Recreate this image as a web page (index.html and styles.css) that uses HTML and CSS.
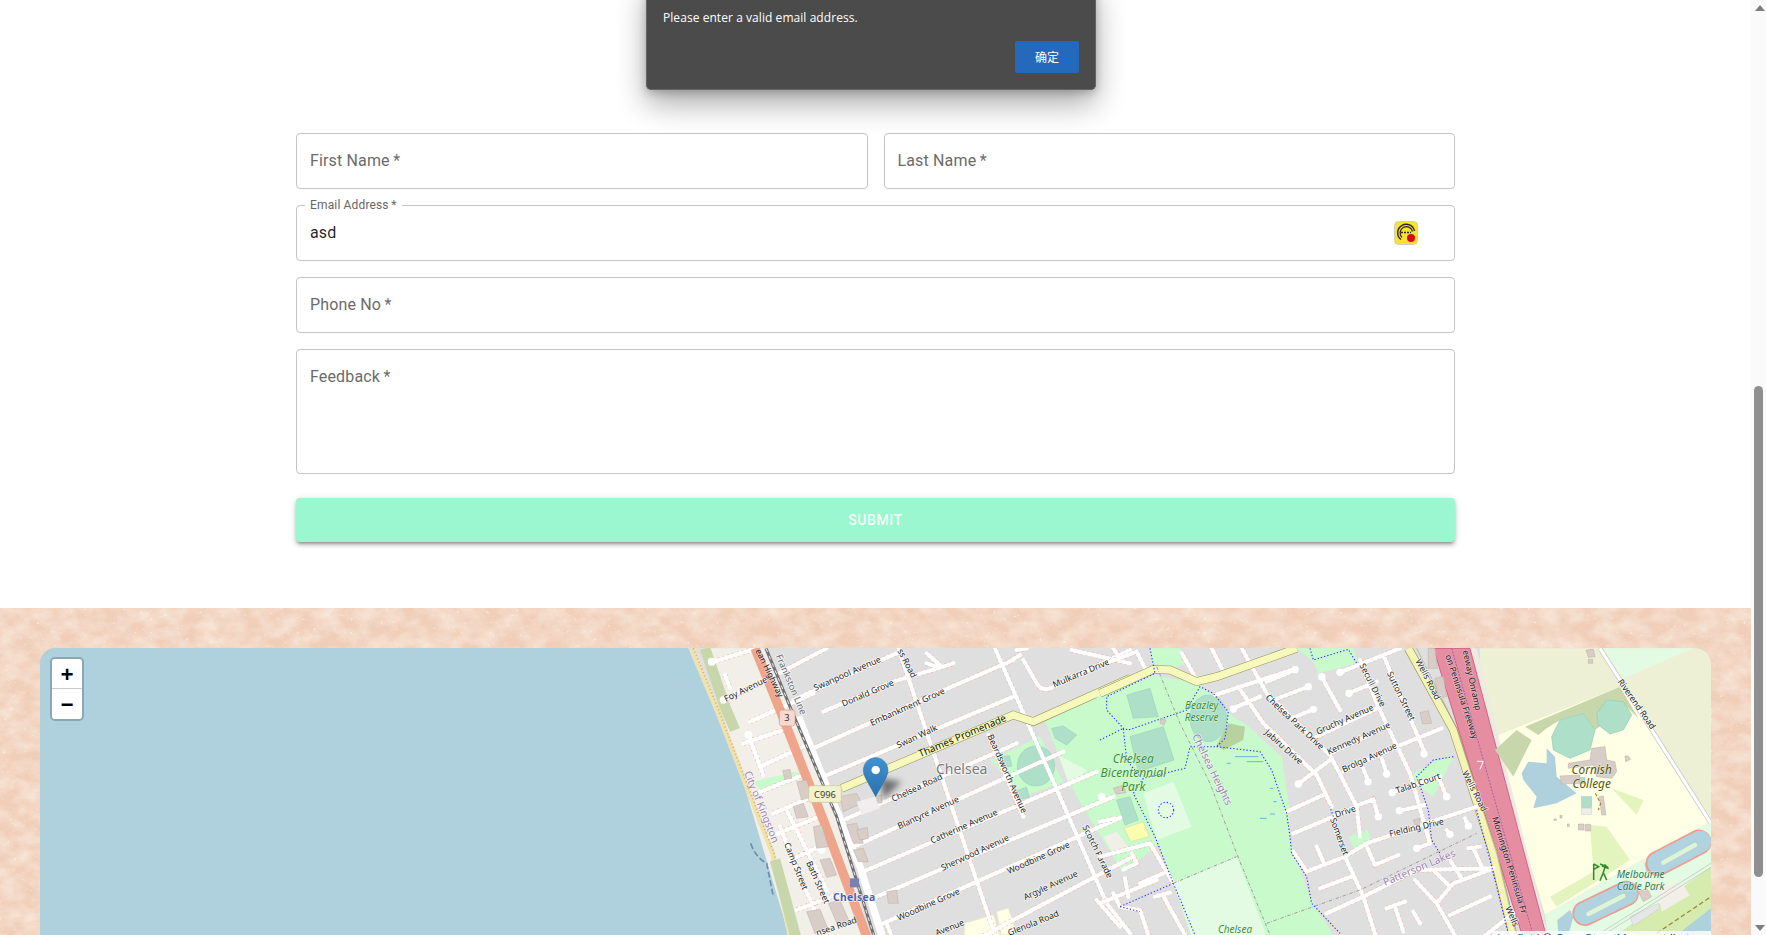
FILE: index.html
```html
<!DOCTYPE html>
<html lang="en">
<head>
<meta charset="utf-8">
<title>Contact</title>
<link rel="stylesheet" href="styles.css">
</head>
<body>
<div class="dialog">
  <p class="dialog-text">Please enter a valid email address.</p>
  <div class="dialog-actions"><button class="dialog-btn" type="button">确定</button></div>
</div>

<main class="form-page">
  <form class="form">
    <div class="row-two">
      <div class="field"><span class="placeholder">First Name&thinsp;*</span></div>
      <div class="field"><span class="placeholder">Last Name&thinsp;*</span></div>
    </div>
    <div class="field field-filled">
      <span class="float-label">Email Address&thinsp;*</span>
      <span class="value">asd</span>
      <svg class="ext-icon" viewBox="0 0 24 24" aria-hidden="true">
        <rect x="0.5" y="0.5" width="23" height="23" rx="4" fill="#fde130" stroke="#cfcfc0"/>
        <path d="M7 18.5A8.5 8.5 0 1 1 20.5 10" fill="none" stroke="#2a2a20" stroke-width="1.4"/>
        <path d="M8 16.5A6.3 6.3 0 1 1 18.5 10.5" fill="none" stroke="#2a2a20" stroke-width="1.3"/>
        <path d="M7 11.5h10" fill="none" stroke="#2a2a20" stroke-width="1.4" stroke-dasharray="2 1"/>
        <circle cx="17" cy="17" r="4" fill="#d8090c"/>
      </svg>
    </div>
    <div class="field"><span class="placeholder">Phone No&thinsp;*</span></div>
    <div class="field field-area"><span class="placeholder">Feedback&thinsp;*</span></div>
    <button class="submit" type="button">SUBMIT</button>
  </form>
</main>

<section class="map-section">
  <svg class="paper" aria-hidden="true">
    <filter id="paperNoise" x="0" y="0" width="100%" height="100%">
      <feTurbulence type="fractalNoise" baseFrequency="0.05 0.07" numOctaves="4" seed="7"/>
      <feColorMatrix type="matrix" values="0 0 0 0 .97  0 0 0 0 .87  0 0 0 0 .79  1.2 0 0 0 -.35"/>
    </filter>
    <filter id="paperSpeck" x="0" y="0" width="100%" height="100%">
      <feTurbulence type="fractalNoise" baseFrequency="0.3" numOctaves="3" seed="11"/>
      <feColorMatrix type="matrix" values="0 0 0 0 1  0 0 0 0 .97  0 0 0 0 .93  9 0 0 0 -6.5"/>
    </filter>
    <rect width="100%" height="100%" filter="url(#paperNoise)"/>
    <rect width="100%" height="100%" filter="url(#paperSpeck)" opacity=".5"/>
  </svg>
  <div class="map">
    <svg class="map-art" viewBox="40 648 1671 287" aria-hidden="true">
      <defs>
        <filter id="pinBlur" x="-50%" y="-50%" width="200%" height="200%"><feGaussianBlur stdDeviation="9"/></filter>
        <linearGradient id="pinFill" x1="0" y1="0" x2="0" y2="1"><stop offset="0" stop-color="#3f92d2"/><stop offset="1" stop-color="#2a70ae"/></linearGradient>
        <path id="w-st" d="M100,65 L230,25 M130,180 L260,120 L440,25 M340,180 L660,35 M135,105 L150,145 M430,215 L640,125 L790,80 L820,70 M740,40 L780,75 M400,325 L700,190 L1000,60 M430,410 L1000,170 M480,545 L1010,310 M510,625 L1150,335 M550,695 L1250,395 M590,770 L1300,470 M610,850 L1350,520 M830,930 L1350,655 M655,25 L960,930 M945,25 L1280,790 L1350,880 M925,285 L1030,530 M1030,60 L1070,130 Q1085,155 1110,145 L1350,30 M980,70 L1020,45 M205,285 L250,405 M190,310 L340,260 M210,245 L400,160 M240,380 L370,320 M230,460 L380,400 M280,520 L400,470 M270,590 L430,525 M300,560 L355,700 L400,800 L430,900 M320,510 L440,750 M330,660 L440,610 M350,810 L480,760 M620,850 L650,930 M740,70 Q780,90 820,70 M1010,30 L1040,25 M1175,30 L1350,70"/>
        <path id="e-st" d="M345,165 L590,85 M400,205 L480,170 M500,125 L585,90 M520,180 L625,140 M575,235 L640,208 M425,25 L500,160 L690,345 L770,500 L780,590 M415,140 L490,250 L650,405 L695,500 M595,432 L690,360 M665,110 L720,210 M720,97 L900,25 M745,160 L830,125 M690,340 L860,260 M650,290 L830,205 M730,395 L890,320 L1025,265 M850,45 L975,340 M780,60 L830,190 L930,400 L990,610 M790,385 L805,425 M845,355 L860,400 M1015,410 L1040,470 M875,458 L1020,410 M775,495 L820,478 L835,530 M900,512 L975,495 M735,650 L800,610 L1130,500 M560,515 L670,465 M580,580 L700,530 L770,500 M580,635 L620,695 L735,650 M650,620 L670,665 M735,650 L790,770 L840,930 M800,620 L825,675 L895,645 M660,745 L760,708 M680,820 L790,770 L950,690 L1180,685 M950,625 L990,610 M1105,625 L1140,620 M1120,625 L1150,690 M1050,660 L1085,715 M1000,690 L1050,740 M945,720 L1010,790 L1090,930 M1010,790 L1060,730 L1180,685 M1050,825 L1170,770 M860,805 L915,785 M885,800 L910,875 M940,815 L960,850 M1100,930 L1240,820 M1040,570 L1050,585 M1095,535 L1105,560 M30,65 L110,35 M110,35 L135,85 M335,25 L365,85 M245,40 L285,110 M40,25 L60,55 M0,650 L150,610 L220,730 M95,640 L110,670 L70,688 M75,715 L85,770 M0,790 L170,720 M120,730 L190,700 M165,770 L210,758 M190,768 L280,930 M40,760 L60,800 M60,800 L120,810 L160,930 M0,545 L45,535 M-10,780 L60,860"/>
      </defs>
      <rect class="m-water" x="40" y="648" width="1671" height="287"/>
      <polygon class="m-resi" points="688,648 713,707 747,793 770,853 790,947 1711,947 1711,648"/>

      <!-- east farmland and college grounds -->
      <g transform="translate(1480 640) scale(.33333)">
        <polygon class="m-farm" points="0,25 693,25 693,560 40,290 0,300"/>
        <polygon class="m-lightpark" points="360,25 640,25 430,115"/>
        <polygon class="m-school" points="40,290 430,135 670,520 693,545 195,825 70,400"/>
        <polygon class="m-lightpark" points="195,825 693,545 693,930 210,930"/>
        <polygon class="m-meadow" points="410,930 693,680 693,930"/>
        <polygon class="m-water" points="560,930 693,810 693,930"/>
      </g>

      <!-- west part -->
      <g transform="translate(680 640) scale(.33333)">
        <polygon class="m-mixed" points="70,25 250,25 350,230 470,530 580,930 340,930"/>
        <polyline class="m-beach" points="35,25 108,200 208,460 278,640 340,930"/>
        <polyline class="m-beach-dash" points="40,25 112,200 212,460 282,640 344,930"/>
        <polyline class="m-scrub" points="75,25 135,200 165,270"/>
        <polyline class="m-scrub" points="285,660 315,770 350,900"/>
        <polygon class="m-park" points="220,425 345,395 375,405 245,455"/>
        <polygon class="m-park" points="1095,245 1350,125 1450,600 1330,700 1190,470"/>
        <polygon class="m-park" points="930,360 1080,290 1150,425 1030,470"/>
        <ellipse class="m-pitch" cx="1068" cy="378" rx="56" ry="60"/>
        <polygon class="m-pitch" points="965,350 988,347 996,378 975,382"/>
        <polygon class="m-pitch" points="1010,452 1040,442 1048,472 1020,478"/>
        <polygon class="m-lightpark" points="1135,345 1220,390 1170,440"/>
        <polygon class="m-pitch" points="1115,265 1150,258 1190,285 1160,315 1125,295"/>
        <polygon class="m-school" points="855,850 940,825 960,885 980,930 850,930"/>
        <polygon class="m-school" points="950,815 985,805 1010,880 965,885"/>

        <use href="#w-st" class="road-under"/>
        <use href="#w-st" class="road-top"/>
        <circle class="cul" cx="95" cy="65" r="12"/><circle class="cul" cx="130" cy="180" r="11"/><circle class="cul" cx="205" cy="285" r="12"/><circle class="cul" cx="425" cy="630" r="11"/><circle class="cul" cx="1265" cy="470" r="11"/>

        <polyline class="rail-road" points="355,230 440,440 540,680 620,930"/>
        <polyline class="m-primary" points="225,25 300,210 430,540 575,930"/>
        <polyline class="m-rail" points="258,25 330,200 470,530 595,930"/>
        <polyline class="m-railline" points="258,25 330,200 470,530 595,930"/>
        <polyline class="m-tertiary-c" points="485,445 1000,225 1060,245 1350,115"/>
        <polyline class="m-tertiary" points="485,445 1000,225 1060,245 1350,115"/>

        <g class="bldg">
          <polygon points="308,392 330,388 335,415 315,418"/><polygon points="340,500 370,490 385,530 350,535"/><polygon points="500,555 530,550 550,610 520,610"/><polygon points="530,570 562,562 565,595 540,600"/><polygon points="520,630 550,625 565,665 535,665"/><polygon points="420,660 450,655 470,705 440,712"/><polygon points="445,790 480,780 510,850 475,860"/><polygon points="380,815 420,808 445,870 405,880"/><polygon points="480,470 530,460 545,490 490,515"/><polygon points="620,755 650,750 655,790 625,790"/><polygon points="590,468 604,465 606,488 592,490"/><polygon points="350,425 380,420 395,470 365,480"/><polygon points="400,560 425,555 445,620 410,625"/>
          <polygon class="bldg-light" points="530,485 585,470 600,505 545,525"/>
        </g>
        <path class="coast-blue" d="M212,610 Q225,650 260,670 Q270,720 280,770"/>
        <rect class="station" x="510" y="715" width="27" height="27"/>

        <text class="lbl" transform="translate(138 186) rotate(-26)">Foy Avenue</text>
        <text class="lbl" transform="translate(406 153) rotate(-24)">Swanpool Avenue</text>
        <text class="lbl" transform="translate(490 200) rotate(-23)">Donald Grove</text>
        <text class="lbl" transform="translate(575 258) rotate(-24)">Embankment Grove</text>
        <text class="lbl" transform="translate(655 325) rotate(-25)">Swan Walk</text>
        <text class="lbl lbl-big" transform="translate(721 352) rotate(-23)">Thames Promenade</text>
        <text class="lbl" transform="translate(1123 143) rotate(-23)">Mulkarra Drive</text>
        <text class="lbl" transform="translate(640 486) rotate(-25)">Chelsea Road</text>
        <text class="lbl" transform="translate(658 568) rotate(-25)">Blantyre Avenue</text>
        <text class="lbl" transform="translate(756 611) rotate(-24)">Catherine Avenue</text>
        <text class="lbl" transform="translate(788 693) rotate(-25)">Sherwood Avenue</text>
        <text class="lbl" transform="translate(986 703) rotate(-24)">Woodbine Grove</text>
        <text class="lbl" transform="translate(656 843) rotate(-24)">Woodbine Grove</text>
        <text class="lbl" transform="translate(1036 781) rotate(-25)">Argyle Avenue</text>
        <text class="lbl" transform="translate(988 888) rotate(-22)">Glenola Road</text>
        <text class="lbl" transform="translate(770 888) rotate(-22)">Avenue</text>
        <text class="lbl" transform="translate(412 888) rotate(-19)">nsea Road</text>
        <text class="lbl" transform="translate(922 288) rotate(66)">Beardsworth Avenue</text>
        <text class="lbl" transform="translate(1207 561) rotate(64)">Scotch Parade</text>
        <text class="lbl" transform="translate(312 612) rotate(68)">Camp Street</text>
        <text class="lbl" transform="translate(378 668) rotate(66)">Bath Street</text>
        <text class="lbl" transform="translate(652 32) rotate(63)">ss Road</text>
        <text class="lbl lbl-road" transform="translate(226 32) rotate(64)">ean Highway</text>
        <text class="lbl lbl-grey" transform="translate(287 48) rotate(67)">Frankston Line</text>
        <text class="lbl lbl-purple" transform="translate(192 398) rotate(68)">City of Kingston</text>
        <text class="lbl lbl-suburb" x="768" y="403">Chelsea</text>
        <text class="lbl lbl-station" x="459" y="783">Chelsea</text>
        <g class="shield-c"><rect x="386" y="437" width="98" height="50" rx="8"/><text x="435" y="473">C996</text></g>
        <g class="shield-3"><rect x="298" y="210" width="47" height="48" rx="8"/><text x="321" y="244">3</text></g>
      </g>

      <!-- middle and east part -->
      <g transform="translate(1100 640) scale(.33333)">
        <polygon class="m-park" points="150,25 240,25 265,70 160,100"/>
        <polygon class="m-park" points="590,25 760,25 775,70 655,100 640,65"/>
        <polygon class="m-park" points="-10,170 160,105 290,130 345,170 400,230 440,255 545,350 568,500 570,600 625,760 725,930 285,930 220,730 170,600 100,470 -10,300"/>
        <polygon class="m-park" points="925,410 1010,360 1060,350 1000,470 960,440"/>
        <polygon class="m-park" points="745,590 805,570 815,610 765,630"/>
        <polygon class="m-lightpark" points="130,460 220,425 275,560 170,600"/>
        <polygon class="m-lightpark" points="220,730 410,650 515,930 290,930"/>
        <polygon class="m-pitch" points="80,165 150,145 175,230 100,235"/>
        <polygon class="m-pitch" points="90,290 190,260 222,360 115,395"/>
        <ellipse class="m-pitch" cx="325" cy="235" rx="55" ry="70"/>
        <polygon class="m-wood" points="350,315 385,250 435,260 430,300 370,330"/>
        <polygon class="m-mixed" points="10,590 50,575 85,620 40,640"/>
        <polygon class="m-school m-court" points="72,565 130,545 148,590 92,605"/>
        <polygon class="m-pitch" points="50,480 90,470 115,540 75,555"/>

        <polygon class="m-verge" points="1110,25 1130,25 1355,930 1340,930"/>
        <polygon class="m-motorway" points="1000,25 1110,25 1350,930 1280,930"/>
        <polyline class="m-motor-line" points="1055,25 1312,930"/>
        <polyline class="m-tert-edge" points="925,25 1060,270 1180,640 1250,930"/>
        <polyline class="m-tert2" points="925,25 1060,270 1180,640 1250,930"/>
        <polyline class="m-thin" points="950,25 1070,265 1190,640 1260,930"/>

        <use href="#e-st" class="road-under"/>
        <use href="#e-st" class="road-top"/>
        <circle class="cul" cx="585" cy="89" r="11"/><circle class="cul" cx="400" cy="207" r="11"/><circle class="cul" cx="625" cy="140" r="11"/><circle class="cul" cx="640" cy="208" r="11"/><circle class="cul" cx="665" cy="110" r="11"/><circle class="cul" cx="720" cy="97" r="11"/><circle class="cul" cx="747" cy="160" r="11"/><circle class="cul" cx="595" cy="432" r="11"/><circle class="cul" cx="972" cy="342" r="11"/><circle class="cul" cx="804" cy="425" r="11"/><circle class="cul" cx="860" cy="402" r="11"/><circle class="cul" cx="877" cy="458" r="11"/><circle class="cul" cx="1040" cy="470" r="11"/><circle class="cul" cx="835" cy="530" r="11"/><circle class="cul" cx="898" cy="512" r="11"/><circle class="cul" cx="1050" cy="583" r="11"/><circle class="cul" cx="1105" cy="558" r="11"/><circle class="cul" cx="950" cy="625" r="11"/><circle class="cul" cx="5" cy="470" r="11"/>

        <polyline class="m-tertiary-c" points="0,160 160,88 210,90 290,125 350,110 590,25"/>
        <polyline class="m-tertiary" points="0,160 160,88 210,90 290,125 350,110 590,25"/>

        <path class="footpath" d="M150,25 L165,100 L20,170 L20,210 L70,265 L85,270 L260,210 L300,140 L340,160 L385,215 L375,295 L350,320 L270,320 L255,385 L130,415 L100,460 L165,590 L220,730 L285,885 M0,300 L70,265 L80,360 L120,410 M630,25 L640,60 L745,28 L770,70 M350,320 L480,335 L515,390 L560,520 L570,590 L575,640 L620,710 L635,790 L720,880 M220,730 L60,800 M1060,350 L1000,360 L950,410 L985,510 L995,600 L1020,640 M60,800 L120,815 M1130,510 L1170,660 L1225,880 M700,530 L690,500"/>
        <circle class="footpath" cx="198" cy="510" r="23"/>
        <path class="stream" d="M405,350h70M440,365h50M380,370h12M510,445h10M520,485h10M510,522h15M480,535h20"/>
        <path class="track" d="M170,80 L240,250 L330,430 L410,640 L510,885 M500,850 L780,750 L1130,580"/>
        <path class="track" d="M220,730 L410,650"/>
        <g class="bldg"><polygon points="960,218 985,212 995,250 968,252"/><polygon points="940,540 958,535 960,555 945,555"/><polygon points="985,25 1005,25 1012,85 985,85"/><polygon points="1005,115 1030,110 1040,170 1015,172"/><polygon points="182,235 198,240 192,255 180,250"/><polygon points="40,445 70,435 78,458 48,462"/></g>

        <text class="lbl" transform="translate(495 175) rotate(43)">Chelsea Park Drive</text>
        <text class="lbl" transform="translate(493 280) rotate(42)">Jabiru Drive</text>
        <text class="lbl" transform="translate(653 284) rotate(-24)">Gruchy Avenue</text>
        <text class="lbl" transform="translate(686 344) rotate(-24)">Kennedy Avenue</text>
        <text class="lbl" transform="translate(731 398) rotate(-25)">Brolga Avenue</text>
        <text class="lbl" transform="translate(891 461) rotate(-19)">Talab Court</text>
        <text class="lbl" transform="translate(778 76) rotate(63)">Secull Drive</text>
        <text class="lbl" transform="translate(860 100) rotate(64)">Sutton Street</text>
        <text class="lbl" transform="translate(946 63) rotate(63)">Wells Road</text>
        <text class="lbl" transform="translate(1086 398) rotate(63)">Wells Road</text>
        <text class="lbl" transform="translate(1216 803) rotate(67)">Wells</text>
        <text class="lbl" transform="translate(690 538) rotate(70)">Somerset</text>
        <text class="lbl" transform="translate(708 533) rotate(-18)">Drive</text>
        <text class="lbl" transform="translate(870 590) rotate(-13)">Fielding Drive</text>
        <text class="lbl lbl-purple" transform="translate(855 738) rotate(-23)">Patterson Lakes</text>
        <text class="lbl lbl-purple" transform="translate(276 288) rotate(64)">Chelsea Heights</text>
        <text class="lbl-park" x="305" y="206">Beazley</text>
        <text class="lbl-park" x="305" y="242">Reserve</text>
        <text class="lbl-park lbl-park-big" x="100" y="368">Chelsea</text>
        <text class="lbl-park lbl-park-big" x="100" y="412">Bicentennial</text>
        <text class="lbl-park lbl-park-big" x="100" y="454">Park</text>
        <text class="lbl-park" x="405" y="880">Chelsea</text>
        <text class="lbl lbl-road" transform="translate(1036 47) rotate(72)">on Peninsula Freeway</text>
        <text class="lbl lbl-road" transform="translate(1088 32) rotate(78)">eeway Onramp</text>
        <text class="lbl lbl-road" transform="translate(1176 533) rotate(73)">Mornington Peninsula Fr</text>
        <path class="mini-7" d="M1131,364H1150L1140,388"/>
      </g>

      <!-- college details -->
      <g transform="translate(1480 640) scale(.33333)">
        <polygon class="m-scrub-f" points="135,260 420,140 475,235 440,200 345,270 310,220 240,240 200,265 175,285"/>
        <polygon class="m-scrub-f" points="45,330 110,270 155,300 100,410"/>
        <polygon class="m-pitch m-pond" points="215,290 240,240 310,220 345,270 330,330 270,355 220,330"/>
        <polygon class="m-pitch m-pond" points="350,220 380,180 430,185 455,225 430,270 390,282 355,255"/>
        <polygon class="m-water" points="125,400 145,365 200,370 200,325 225,350 230,410 290,460 230,490 160,505 170,470 130,420"/>
        <polygon class="m-lawn" points="395,445 490,480 470,525"/>
        <polygon class="m-lawn" points="330,555 380,560 450,660 340,695"/>
        <polygon class="m-lawn" points="210,770 340,695 450,660 230,800"/>
        <polygon class="m-meadow" points="410,885 693,680 693,770 530,880"/>
        <polyline class="river-road-edge" points="360,25 693,550"/>
        <polyline class="river-road" points="360,25 693,550"/>
        <g class="bldg">
          <polygon points="335,325 375,320 380,360 405,365 410,395 395,415 350,410 340,375 265,385 265,370 330,360"/>
          <polygon points="240,408 300,405 300,430 245,432"/>
          <polygon points="318,30 340,28 345,50 325,52"/><polygon points="325,58 338,58 338,70 325,70"/>
          <polygon points="435,348 445,348 452,358 437,365"/>
          <polygon points="295,552 312,552 312,570 295,570"/><polygon points="316,553 332,553 332,573 316,573"/>
          <rect x="262" y="552" width="6" height="8"/><rect x="240" y="526" width="6" height="8"/><rect x="222" y="537" width="7" height="4"/>
          <polygon points="358,470 370,468 378,525 365,525"/>
          <polygon points="475,755 500,745 515,770 490,785"/>
          <polygon points="495,670 510,665 515,690 500,695"/>
        </g>
        <rect class="m-pitch" x="305" y="470" width="30" height="33"/>
        <rect class="m-court2" x="304" y="505" width="31" height="18"/>
        <rect class="m-pitch" x="300" y="413" width="15" height="18"/>
        <path class="school-dash" d="M346,460 L362,490 L355,510"/>

        <g class="pool">
          <path class="pool-edge" d="M535,670 L660,605"/><path class="pool-water" d="M535,670 L660,605"/><path class="pool-inner" d="M550,668 L645,615"/>
          <path class="pool-edge" d="M315,820 L440,760"/><path class="pool-water" d="M315,820 L440,760"/><path class="pool-inner" d="M325,822 L430,768"/>
        </g>
        <polygon class="m-water" points="232,840 270,810 280,830 265,885 235,885"/>
        <polygon class="m-grey" points="530,740 605,730 630,765 545,815"/>
        <polygon class="m-grey2" points="450,830 535,790 540,805 460,858"/>
        <path class="rail-thin" d="M360,880 L693,670"/>
        <path class="rail-thin" d="M370,885 L693,682"/>
        <path class="brown-dash" d="M530,880 L693,770"/>
        <polygon class="m-water" points="590,885 693,805 693,885"/>

        <path class="golf" d="M341,720V672M341,672L356,680L341,688"/>
        <path class="golf" d="M375,682L369,700L360,722M371,700L380,720M366,678L386,686M360,672L385,682"/>
        <circle class="golf-fill" cx="375" cy="678" r="5"/>

        <text class="lbl" transform="translate(412 125) rotate(55)">Riverend Road</text>
        <text class="lbl-college" x="335" y="403">Cornish</text>
        <text class="lbl-college" x="335" y="445">College</text>
        <text class="lbl-park lbl-cable" x="482" y="714">Melbourne</text>
        <text class="lbl-park lbl-cable" x="482" y="749">Cable Park</text>
      </g>

      <!-- marker -->
      <g transform="translate(680 640) scale(.33333)">
        <path class="pin-blur" d="M600,415 L665,425 L610,478 Z"/>
        <path class="pin" d="M587,353C565,353 550,371 550,392C550,410 575,445 587,470C600,445 624,410 624,392C624,371 608,353 587,353Z"/>
        <circle class="pin-hole" cx="587" cy="390" r="13"/>
      </g>
    </svg>

    <div class="zoom">
      <button class="zoom-btn" type="button">+</button>
      <button class="zoom-btn" type="button">−</button>
    </div>
    <div class="attribution"><a>Leaflet</a> | © <a>OpenStreetMap</a> contributors</div>
  </div>
</section>

<div class="page-rail">
  <span class="rail-arrow rail-arrow-up"></span>
  <span class="rail-thumb"></span>
  <span class="rail-arrow rail-arrow-down"></span>
</div>
</body>
</html>
```

FILE: styles.css
```css
html { height: 935px; overflow: hidden; background: #fff; }
body { margin: 0; position: relative; width: 1766px; padding-right: 15px; box-sizing: border-box; height: 935px; font-family: Roboto, "Liberation Sans", sans-serif; }

/* native alert */
.dialog {
  position: absolute; left: 646px; top: -20px; z-index: 5; width: 450px; height: 110px;
  box-sizing: border-box; padding: 29px 16px 16px 16px;
  background: #4b4b4b; border: 1px solid #666; border-top: 0; border-radius: 5px;
  box-shadow: 0 14px 30px rgba(0,0,0,.33), 0 3px 8px rgba(0,0,0,.2);
  color: #fff; font: 12px/18px "Open Sans", "Noto Sans", sans-serif; letter-spacing: .06px;
}
.dialog-text { margin: 0; }
.dialog-actions { display: flex; justify-content: flex-end; margin-top: 14px; }
.dialog-btn {
  width: 64px; height: 32px; padding: 0 0 2px; border: 0; border-radius: 2px; background: #2569bd; color: #fff;
  font: 12px "Noto Sans CJK SC", sans-serif;
}

/* form */
.form-page { padding-top: 133px; height: 608px; box-sizing: border-box; }
.form { width: 1159px; margin: 0 auto; display: flex; flex-direction: column; gap: 16px; }
.row-two { display: grid; grid-template-columns: 1fr 1fr; gap: 16px; }
.field {
  position: relative; box-sizing: border-box; height: 56px; padding: 15px 13px;
  display: flex; align-items: flex-start; justify-content: space-between;
  border: 1px solid #c4c4c4; border-radius: 4px; font-size: 16px; line-height: 23px; letter-spacing: .15px;
}
.field-area { height: 125px; }
.placeholder { color: #6b6b6b; }
.value { color: rgba(0,0,0,.87); }
.float-label {
  position: absolute; left: 8px; top: -8px; padding: 0 5px; background: #fff;
  color: #666; font-size: 12px; line-height: 14px;
}
.ext-icon { position: absolute; left: 1097px; top: 15px; width: 24px; height: 24px; }
.submit {
  height: 44px; margin-top: 8px; padding: 0; border: 0; border-radius: 4px; background: #9af7cf;
  color: rgba(255,255,255,.9); font: 500 14px Roboto, sans-serif; letter-spacing: .55px;
  box-shadow: 0 3px 3px -2px rgba(0,0,0,.3), 0 3px 4px 0 rgba(0,0,0,.2), 0 1px 8px 0 rgba(0,0,0,.12);
}

/* map section */
.map-section { position: relative; height: 327px; box-sizing: border-box; padding: 40px 40px 0; background: #f0ceb8; overflow: hidden; }
.paper { position: absolute; inset: 0; width: 100%; height: 100%; }
.map { position: relative; height: 287px; border-radius: 16px 16px 0 0; overflow: hidden; background: #aed1dd; }
.map-art { display: block; width: 1671px; height: 287px; }
.zoom {
  position: absolute; left: 10px; top: 9px; display: flex; flex-direction: column; width: 30px;
  border: 2px solid rgba(0,0,0,.2); border-radius: 5px; background-clip: padding-box;
}
.zoom-btn {
  width: 30px; height: 30px; padding: 5px 0 0; border: 0; background: #fff; color: #000;
  font: bold 22px/25px "Liberation Mono", monospace;
}
.zoom-btn:first-child { border-bottom: 1px solid #ccc; border-radius: 3px 3px 0 0; }
.zoom-btn:last-child { border-radius: 0 0 3px 3px; }
.attribution {
  position: absolute; right: 0; top: 283px; height: 16px; padding: 0 5px; box-sizing: border-box;
  background: rgba(255,255,255,.8); color: #333; font: 12px/16px "Liberation Sans", sans-serif;
}
.attribution a { color: #0078a8; }

/* map fills */
.m-water { fill: #aed1dd; }
.m-resi { fill: #e0dfdf; }
.m-farm { fill: #eef0d5; }
.m-school { fill: #ffffe5; stroke: #eeeecb; stroke-width: 2; }
.m-lightpark { fill: #e3fbe3; }
.m-meadow { fill: #d5ecae; }
.m-mixed { fill: #f2efe9; }
.m-park { fill: #c8facc; }
.m-pitch { fill: #aedfc9; stroke: #93cdb4; stroke-width: 1.5; }
.m-pond { stroke: #8ecdb2; stroke-width: 2; }
.m-wood { fill: #b5d29f; }
.m-lawn { fill: #e3f4bf; }
.m-scrub-f { fill: #c8d7ab; }
.m-court { fill: #fdfdb0; stroke: #cfe0b0; }
.m-court2 { fill: #eeeeee; stroke: #d5cfc8; stroke-width: 1.5; }
.m-grey { fill: #f2efe9; }
.m-grey2 { fill: #e6e6e6; stroke: #c8c8c8; stroke-width: 1.5; }
.m-verge { fill: #ebebe0; }
.m-motorway { fill: #e58ea2; stroke: #d8336f; stroke-width: 2; }
.m-beach, .m-beach-dash, .m-scrub, .rail-road, .m-primary, .m-rail, .m-railline, .m-tertiary, .m-tertiary-c, .m-tert-edge, .m-tert2, .m-thin, .m-motor-line, .river-road, .river-road-edge { fill: none; }
.m-beach { stroke: #efe2ac; stroke-width: 15; }
.m-beach-dash { stroke: #d6a878; stroke-width: 5; stroke-dasharray: 3 8; }
.m-scrub { stroke: #c8d7ab; stroke-width: 32; }
.rail-road { stroke: #fff; stroke-width: 22; }
.m-primary { stroke: #efa58c; stroke-width: 28; }
.m-rail { stroke: #707070; stroke-width: 9; }
.m-railline { stroke: #eee; stroke-width: 3; stroke-dasharray: 12 12; }
.m-tertiary-c { stroke: #8f9150; stroke-width: 25; }
.m-tertiary { stroke: #f7f8bb; stroke-width: 22; }
.m-tert-edge { stroke: #9c9c60; stroke-width: 26; }
.m-tert2 { stroke: #f4f4b4; stroke-width: 22; }
.m-thin { stroke: #8a8a70; stroke-width: 1.5; }
.m-motor-line { stroke: #b05a9c; stroke-width: 3; stroke-dasharray: 6 4; }
.river-road-edge { stroke: #c9c9c9; stroke-width: 14; }
.river-road { stroke: #fff; stroke-width: 9; }

.road-under { fill: none; stroke: #f3a79c; stroke-width: 15; stroke-dasharray: 6 9; }
.road-top { fill: none; stroke: #fff; stroke-width: 12; stroke-linecap: round; }
.cul { fill: #fff; }
.bldg polygon, .bldg rect { fill: #d9cec7; stroke: #b9aca4; stroke-width: 1.5; }
.bldg .bldg-light { fill: #f0eeee; stroke: none; }
.coast-blue { fill: none; stroke: #6f8ea8; stroke-width: 5; stroke-dasharray: 18 8; }
.station { fill: #7981b1; }
.footpath { fill: none; stroke: #2b2bff; stroke-width: 3.2; stroke-dasharray: 4 6; }
.stream { fill: none; stroke: #5aa0f0; stroke-width: 2.5; }
.track { fill: none; stroke: #a39a9a; stroke-width: 3; stroke-dasharray: 10 5 2 5; }
.mini-7 { fill: none; stroke: #fff; stroke-width: 3; }
.pool-edge { fill: none; stroke: #f08a80; stroke-width: 76; stroke-linecap: round; stroke-dasharray: 5 7; opacity: .85; }
.pool-water { fill: none; stroke: #b1d3e0; stroke-width: 66; stroke-linecap: round; }
.pool-inner { fill: none; stroke: #dff5d2; stroke-width: 13; stroke-linecap: round; }
.rail-thin { fill: none; stroke: #bbb; stroke-width: 2; }
.brown-dash { fill: none; stroke: #a08a40; stroke-width: 4; stroke-dasharray: 14 8; }
.school-dash { fill: none; stroke: #a8862a; stroke-width: 3.5; stroke-dasharray: 10 6; }
.golf { fill: none; stroke: #2e8a2e; stroke-width: 4.5; }
.golf-fill { fill: #2e8a2e; }
.pin-blur { fill: rgba(0,0,0,.5); filter: url(#pinBlur); }
.pin { fill: url(#pinFill); stroke: #2a6da8; stroke-width: 1.5; }
.pin-hole { fill: #fff; stroke: rgba(0,0,0,.15); stroke-width: 2; }

/* map labels */
.lbl {
  font: 26px "Noto Sans", sans-serif; fill: #222;
  stroke: rgba(255,255,255,.85); stroke-width: 4; paint-order: stroke;
}
.lbl-big { font-size: 30px; fill: #111; stroke: rgba(247,248,187,.9); }
.lbl-road { fill: #1a1a1a; stroke: rgba(255,255,255,.35); }
.lbl-grey { fill: #666; font-size: 28px; }
.lbl-purple { fill: #9a7fae; font-size: 31px; stroke-width: 3; }
.lbl-suburb { fill: #777; font-size: 42px; }
.lbl-station { fill: #4c5cb8; font-size: 31px; font-weight: 700; letter-spacing: 1px; }
.lbl-park {
  font: italic 30px "Noto Sans", sans-serif; fill: #37912f; text-anchor: middle;
  stroke: rgba(255,255,255,.55); stroke-width: 3; paint-order: stroke;
}
.lbl-park-big { font-size: 36px; }
.lbl-cable { fill: #2f7a4c; font-size: 30px; }
.lbl-college {
  font: italic 35.5px "Noto Sans", sans-serif; fill: #565610; text-anchor: middle;
  stroke: rgba(255,255,255,.6); stroke-width: 3; paint-order: stroke;
}
.shield-c rect { fill: #f2f2cc; stroke: #c6c69a; stroke-width: 2; }
.shield-c text { font: 28px "Noto Sans", sans-serif; fill: #3d3d2e; text-anchor: middle; }
.shield-3 rect { fill: #f8d8cf; stroke: #cf9a8c; stroke-width: 2; }
.shield-3 text { font: 28px "Noto Sans", sans-serif; fill: #333; text-anchor: middle; }

/* window scroll rail drawn in the screenshot */
.page-rail {
  position: absolute; left: 1751px; top: 0; z-index: 6; width: 15px; height: 935px;
  background: #fafafa;
}
.rail-arrow { position: absolute; left: 4px; width: 0; height: 0; border-left: 5px solid transparent; border-right: 5px solid transparent; }
.rail-arrow-up { top: 5px; border-bottom: 6px solid #7d7d7d; }
.rail-arrow-down { bottom: 4px; border-top: 6px solid #7d7d7d; }
.rail-thumb { position: absolute; left: 3px; top: 386px; width: 9px; height: 491px; border-radius: 5px; background: #8f8f8f; }
```
